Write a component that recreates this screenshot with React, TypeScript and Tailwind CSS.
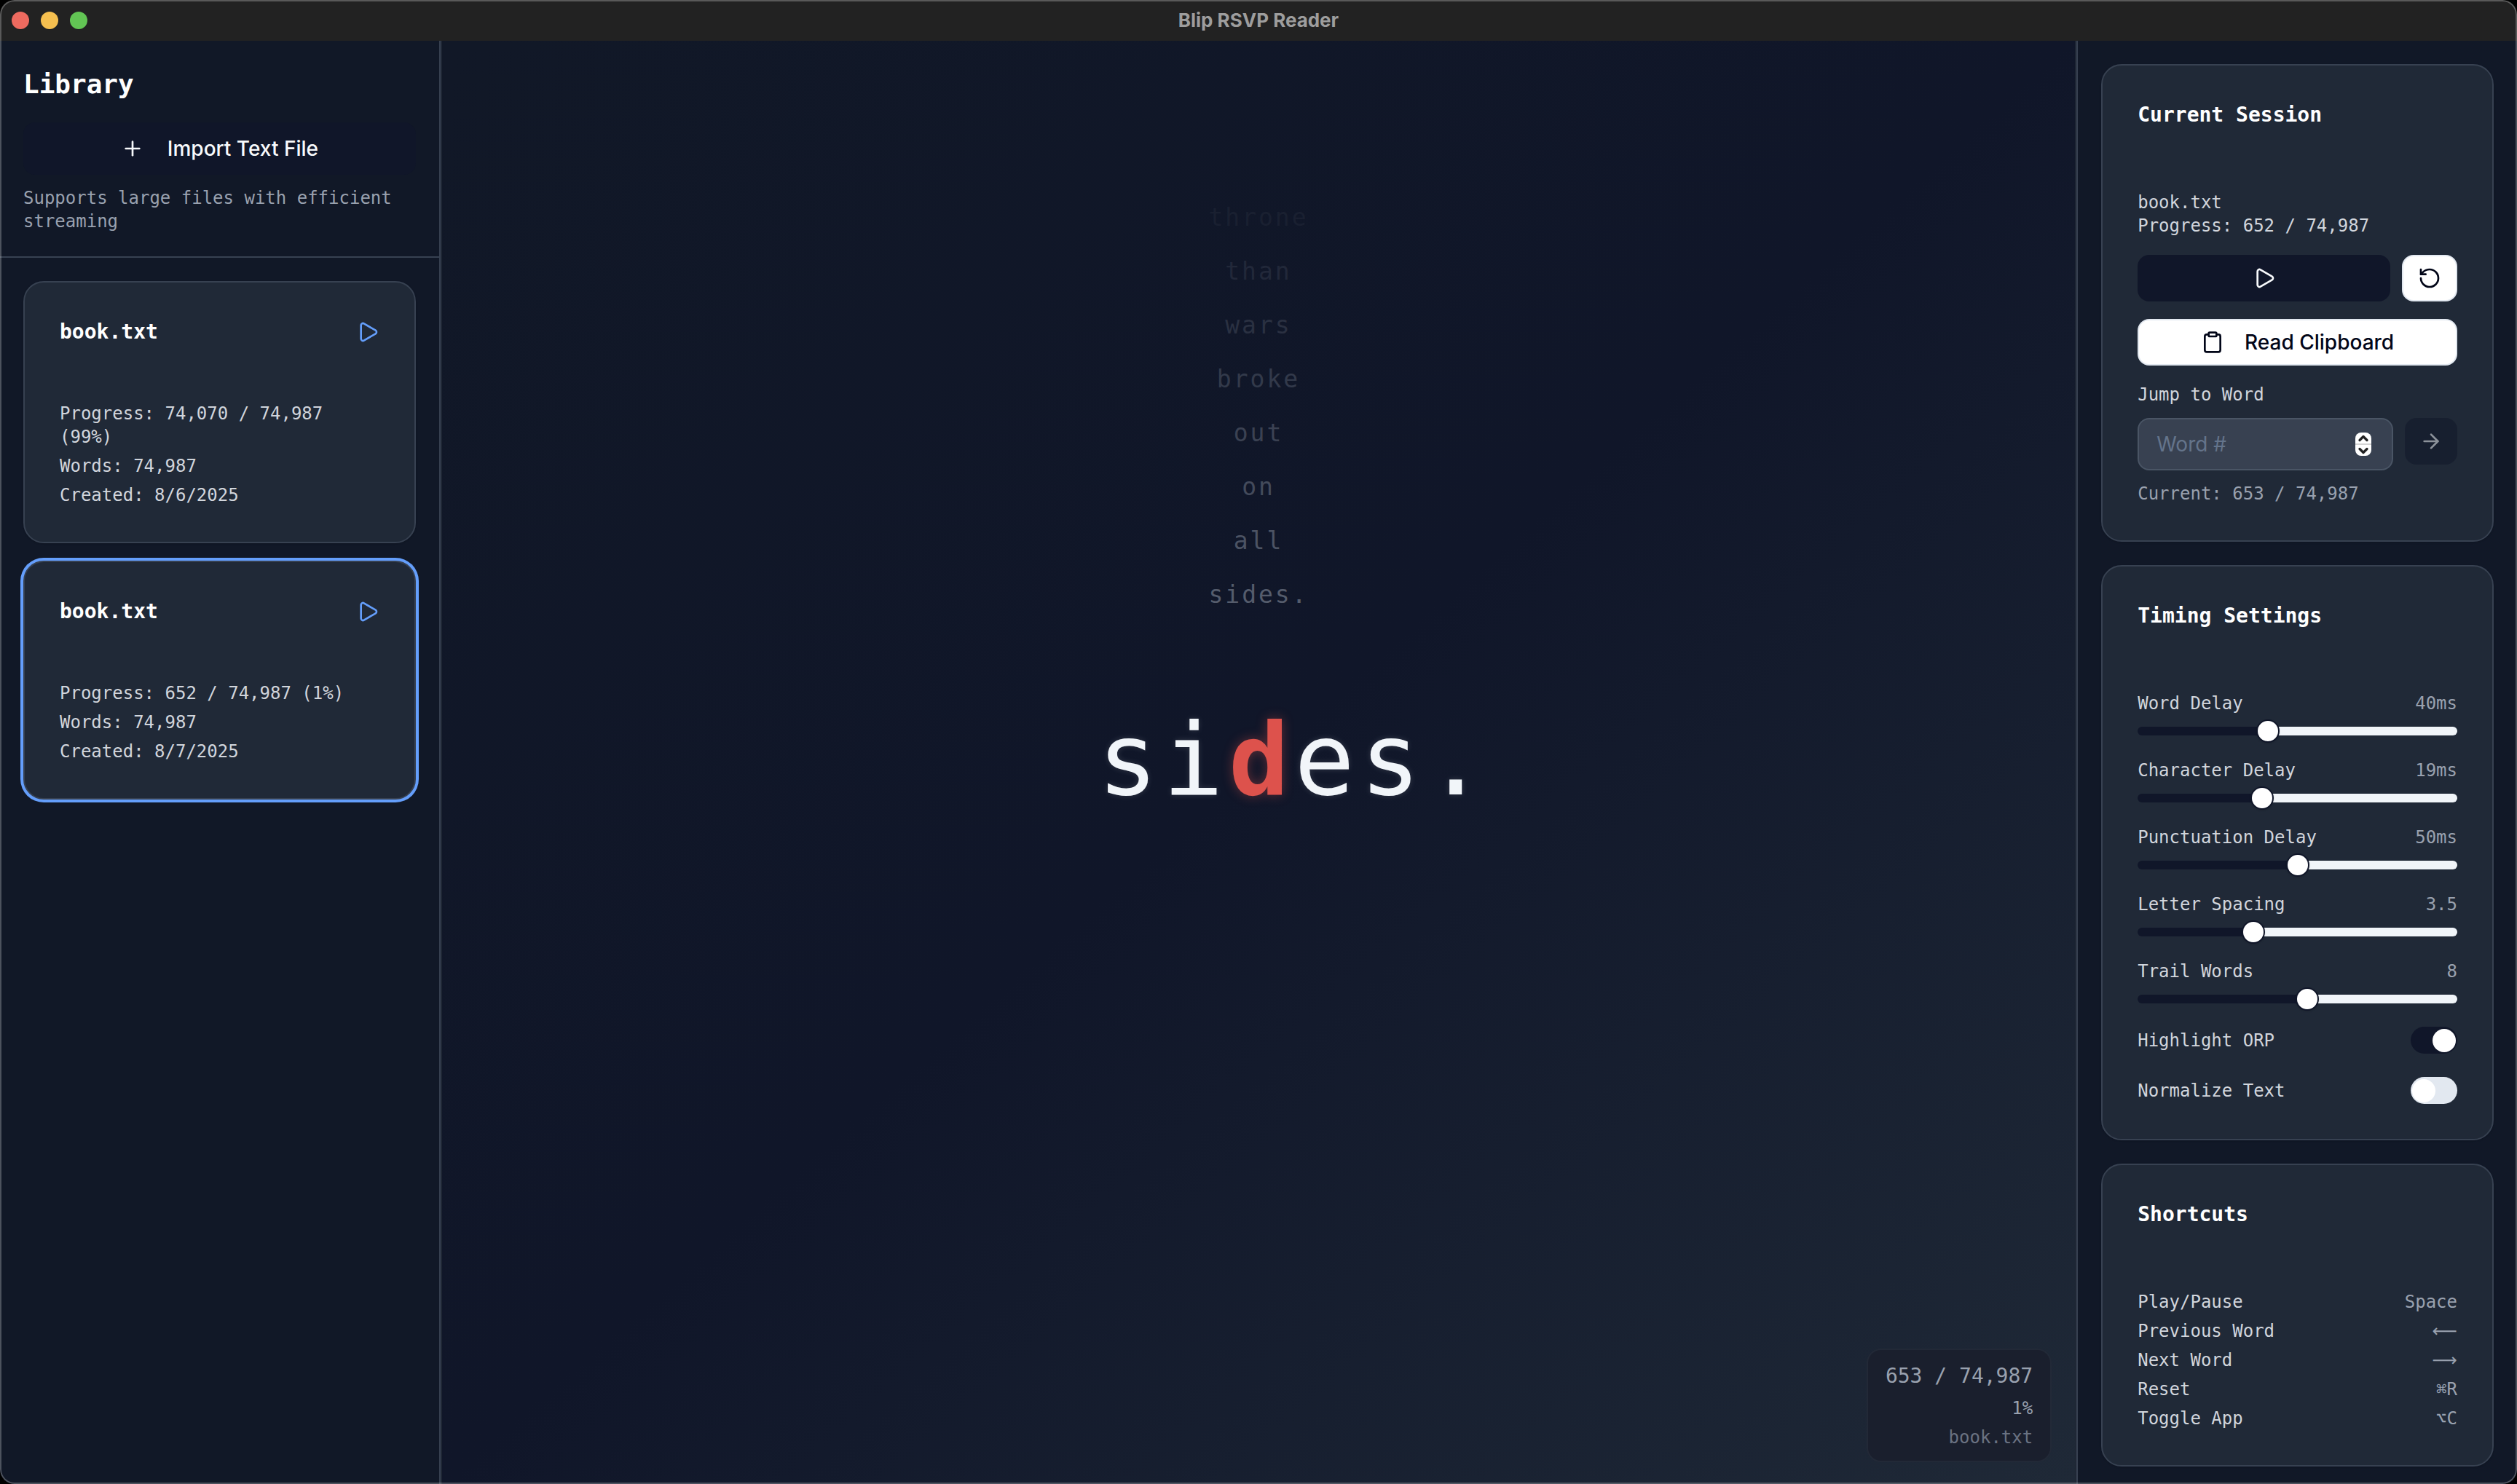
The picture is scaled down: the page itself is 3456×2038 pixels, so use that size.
import React, { useState } from "react";
import type { ReactNode } from "react";
import {
  ArrowRight,
  ChevronDown,
  ChevronUp,
  Clipboard,
  Play,
  Plus,
  RotateCcw,
} from "lucide-react";

type Book = { name: string; progress: string; words: string; created: string; active: boolean };

const books: Book[] = [
  { name: "book.txt", progress: "74,070 / 74,987 (99%)", words: "74,987", created: "8/6/2025", active: false },
  { name: "book.txt", progress: "652 / 74,987 (1%)", words: "74,987", created: "8/7/2025", active: true },
];

const trail = ["throne", "than", "wars", "broke", "out", "on", "all", "sides."];

const timings = [
  { id: "word-delay", label: "Word Delay", value: 40, max: 100, step: 1, unit: "ms" },
  { id: "character-delay", label: "Character Delay", value: 19, max: 50, step: 1, unit: "ms" },
  { id: "punctuation-delay", label: "Punctuation Delay", value: 50, max: 100, step: 1, unit: "ms" },
  { id: "letter-spacing", label: "Letter Spacing", value: 3.5, max: 10, step: 0.5, unit: "" },
  { id: "trail-words", label: "Trail Words", value: 8, max: 15, step: 1, unit: "" },
];

const shortcuts: { action: string; keys: ReactNode }[] = [
  { action: "Play/Pause", keys: "Space" },
  { action: "Previous Word", keys: <span className="font-['DejaVu_Sans',sans-serif]">⟵</span> },
  { action: "Next Word", keys: <span className="font-['DejaVu_Sans',sans-serif]">⟶</span> },
  { action: "Reset", keys: "⌘R" },
  { action: "Toggle App", keys: "⌥C" },
];

function TitleBar() {
  return (
    <header className="grid h-14 grid-cols-[1fr_auto_1fr] items-center bg-[#222222] px-4">
      <div className="flex gap-4">
        <button type="button" aria-label="Close" className="size-6 rounded-full bg-[#ed6a5f]" />
        <button type="button" aria-label="Minimize" className="size-6 rounded-full bg-[#f5bf4f]" />
        <button type="button" aria-label="Zoom" className="size-6 rounded-full bg-[#62c554]" />
      </div>
      <h1 className="font-['Inter',sans-serif] text-[26px] leading-8 font-bold text-[#9d9d9d]">
        Blip RSVP Reader
      </h1>
    </header>
  );
}

function BookCard({ book }: { book: Book }) {
  return (
    <article
      className={
        book.active
          ? "rounded-[28px] border-2 border-[#374151] bg-[#202937] p-12 shadow-sm ring-4 ring-[#649efb]"
          : "rounded-[28px] border-2 border-[#374151] bg-[#202937] p-12 shadow-sm"
      }
    >
      <div className="flex h-10 items-center justify-between">
        <h3 className="text-[28px] leading-10 font-bold text-white">{book.name}</h3>
        <button type="button" aria-label={`Play ${book.name}`} className="text-[#649efb]">
          <Play size={32} />
        </button>
      </div>
      <div className="mt-[76px] flex flex-col gap-2 text-[24px] leading-8 text-[#d1d5dc]">
        <p>Progress: {book.progress}</p>
        <p>Words: {book.words}</p>
        <p>Created: {book.created}</p>
      </div>
    </article>
  );
}

function Library() {
  return (
    <aside className="border-r-2 border-[#374151] bg-[#111827]">
      <div className="border-b-2 border-[#374151] p-8">
        <h2 className="text-[36px] leading-14 font-bold text-white">Library</h2>
        <button
          type="button"
          className="mt-6 flex h-18 w-full items-center justify-center gap-8 rounded-2xl bg-[#101629] font-['Inter',sans-serif] text-[28px] font-medium text-slate-50"
        >
          <Plus size={32} />
          Import Text File
        </button>
        <p className="mt-4 text-[24px] leading-8 text-[#99a1af]">
          Supports large files with efficient streaming
        </p>
      </div>
      <div className="flex flex-col gap-6 p-8">
        {books.map((book) => (
          <BookCard key={book.created} book={book} />
        ))}
      </div>
    </aside>
  );
}

function Reader() {
  return (
    <main className="grid grid-rows-[1fr_auto_1fr] border-x-2 border-[#1f2735] bg-linear-to-br from-[#111827] via-[#101629] to-[#1f2937] pb-1.5">
      <div className="flex flex-col items-center justify-end gap-6 pb-[133px] text-[33px] leading-[50px] tracking-[3px] text-[#99a1af]">
        {trail.map((word, i) => (
          <span key={word} style={{ opacity: ((i + 1) / trail.length) * 0.5 }}>
            {word}
          </span>
        ))}
      </div>
      <p className="grid grid-cols-[1fr_auto_1fr] pl-2 text-[138px] leading-[138px] tracking-[7px] text-slate-100 [text-shadow:0_0_8px_rgba(241,245,249,0.15)]">
        <span className="text-right">si</span>
        <span className="font-bold text-[#dd524c] [text-shadow:0_0_16px_rgba(221,82,76,0.4)]">d</span>
        <span>es.</span>
      </p>
      <div className="mr-8 mb-6 self-end justify-self-end rounded-[20px] border-2 border-[#222937] bg-[#1a1f2d] px-6 py-4 text-right">
        <p className="text-[28px] leading-10 text-[#99a1af]">653 / 74,987</p>
        <p className="mt-2 text-[24px] leading-8 text-[#99a1af]">1%</p>
        <p className="mt-2 text-[24px] leading-8 text-[#6a7282]">book.txt</p>
      </div>
    </main>
  );
}

function Panel({ title, children }: { title: string; children: ReactNode }) {
  return (
    <section className="rounded-[28px] border-2 border-[#374151] bg-[#202937] p-12 shadow-sm">
      <h2 className="mb-[84px] text-[28px] leading-10 font-bold text-white">{title}</h2>
      {children}
    </section>
  );
}

function CurrentSession() {
  const [target, setTarget] = useState("");
  const step = (by: number) => setTarget(String(Math.max(0, Number(target) + by)));
  return (
    <Panel title="Current Session">
      <div className="text-[24px] leading-8 text-[#d1d5dc]">
        <p>book.txt</p>
        <p>Progress: 652 / 74,987</p>
      </div>
      <div className="mt-6 flex gap-4">
        <button
          type="button"
          aria-label="Play"
          className="flex h-16 flex-1 items-center justify-center rounded-2xl bg-[#101629] text-slate-50"
        >
          <Play size={32} />
        </button>
        <button
          type="button"
          aria-label="Reset"
          className="flex h-16 w-19 items-center justify-center rounded-2xl border-2 border-slate-200 bg-white text-slate-950"
        >
          <RotateCcw size={32} />
        </button>
      </div>
      <button
        type="button"
        className="mt-6 flex h-16 w-full items-center justify-center gap-7 rounded-2xl border-2 border-slate-200 bg-white font-['Inter',sans-serif] text-[28px] font-medium text-slate-950"
      >
        <Clipboard size={32} />
        Read Clipboard
      </button>
      <label htmlFor="jump" className="mt-6 block text-[24px] leading-8 text-[#d1d5dc]">
        Jump to Word
      </label>
      <div className="mt-4 flex items-start gap-4">
        <div className="flex h-18 min-w-0 flex-1 items-center rounded-2xl border-2 border-[#4a5565] bg-[#384151] pr-7 pl-6">
          <input
            id="jump"
            type="number"
            placeholder="Word #"
            value={target}
            onChange={(e) => setTarget(e.target.value)}
            className="min-w-0 flex-1 appearance-none bg-transparent font-['Inter',sans-serif] text-[28px] text-white outline-none [-moz-appearance:textfield] placeholder:text-[#64748b] [&::-webkit-inner-spin-button]:appearance-none"
          />
          <div className="grid h-8 w-[22px] grid-rows-2 overflow-hidden rounded-lg bg-white text-[#222222]">
            <button
              type="button"
              aria-label="Increase"
              onClick={() => step(1)}
              className="flex min-h-0 items-center justify-center border-b border-[#d4d4d4]"
            >
              <ChevronUp size={20} strokeWidth={4} className="shrink-0" />
            </button>
            <button
              type="button"
              aria-label="Decrease"
              onClick={() => step(-1)}
              className="flex min-h-0 items-center justify-center border-t border-[#d4d4d4]"
            >
              <ChevronDown size={20} strokeWidth={4} className="shrink-0" />
            </button>
          </div>
        </div>
        <button
          type="button"
          aria-label="Go to word"
          className="flex h-16 w-18 items-center justify-center rounded-2xl bg-[#101629] text-slate-50 opacity-50"
        >
          <ArrowRight size={32} />
        </button>
      </div>
      <p className="mt-4 text-[24px] leading-8 text-[#99a1af]">Current: 653 / 74,987</p>
    </Panel>
  );
}

function TimingSlider({ id, label, value, max, step, unit }: (typeof timings)[number]) {
  const [current, setCurrent] = useState(value);
  const stop = `calc(16px + (100% - 32px) * ${current / max})`;
  return (
    <div>
      <div className="flex justify-between text-[24px] leading-8">
        <label htmlFor={id} className="text-[#d1d5dc]">
          {label}
        </label>
        <output htmlFor={id} className="text-[#99a1af]">
          {current}
          {unit}
        </output>
      </div>
      <input
        id={id}
        type="range"
        min={0}
        max={max}
        step={step}
        value={current}
        onChange={(e) => setCurrent(Number(e.target.value))}
        style={{ backgroundImage: `linear-gradient(to right, #101629 ${stop}, #f1f5f9 ${stop})` }}
        className="mt-4 block h-3 w-full appearance-none rounded-full [&::-webkit-slider-thumb]:size-8 [&::-webkit-slider-thumb]:appearance-none [&::-webkit-slider-thumb]:rounded-full [&::-webkit-slider-thumb]:border-2 [&::-webkit-slider-thumb]:border-[#101629] [&::-webkit-slider-thumb]:bg-white [&::-webkit-slider-thumb]:shadow-sm"
      />
    </div>
  );
}

function ToggleRow({ id, label, initial }: { id: string; label: string; initial: boolean }) {
  return (
    <div className="flex items-center justify-between">
      <label htmlFor={id} className="text-[24px] leading-8 text-[#d1d5dc]">
        {label}
      </label>
      <input
        id={id}
        type="checkbox"
        role="switch"
        defaultChecked={initial}
        className="flex h-[37px] w-16 appearance-none items-center rounded-full bg-slate-200 px-[2px] before:size-8 before:rounded-full before:bg-white checked:justify-end checked:bg-[#101629]"
      />
    </div>
  );
}

function Controls() {
  return (
    <aside className="flex flex-col gap-8 border-l-2 border-[#374151] bg-[#111827] px-8 pt-8 pb-6">
      <CurrentSession />
      <Panel title="Timing Settings">
        <div className="flex flex-col gap-8">
          {timings.map((t) => (
            <TimingSlider key={t.id} {...t} />
          ))}
          <ToggleRow id="highlight-orp" label="Highlight ORP" initial={true} />
          <ToggleRow id="normalize-text" label="Normalize Text" initial={false} />
        </div>
      </Panel>
      <Panel title="Shortcuts">
        <dl className="flex flex-col gap-2 text-[24px] leading-8">
          {shortcuts.map((s) => (
            <div key={s.action} className="flex h-8 justify-between">
              <dt className="text-[#d1d5dc]">{s.action}</dt>
              <dd className="text-[#99a1af]">{s.keys}</dd>
            </div>
          ))}
        </dl>
      </Panel>
    </aside>
  );
}

export default function App() {
  return (
    <div className="bg-black font-['DejaVu_Sans_Mono',monospace]">
      <div className="relative flex min-h-screen flex-col overflow-hidden rounded-[20px]">
        <TitleBar />
        <div className="grid flex-1 grid-cols-[17.5%_1fr_17.5%]">
          <Library />
          <Reader />
          <Controls />
        </div>
        <div className="pointer-events-none absolute inset-0 rounded-[20px] border-2 border-white/25" />
      </div>
    </div>
  );
}
